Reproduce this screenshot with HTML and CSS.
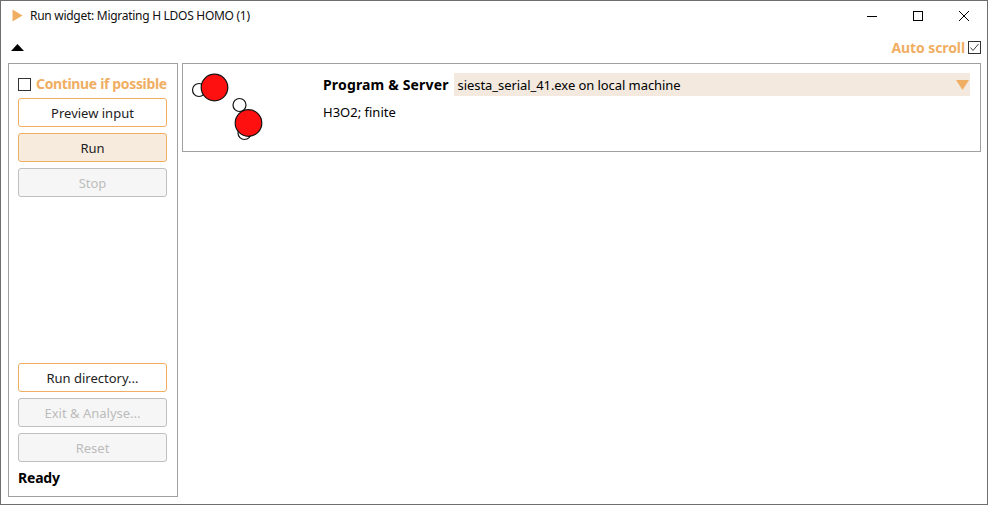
FILE: index.html
```html
<!DOCTYPE html>
<html lang="en">
<head>
<meta charset="utf-8">
<title>Run widget</title>
<link rel="stylesheet" href="styles.css">
</head>
<body>
<div class="window">
  <header class="titlebar">
    <svg class="app-icon" width="12" height="13" viewBox="0 0 12 13"><path d="M0.5 0.5 L10.5 6.5 L0.5 12.5 Z" fill="#f0ae63"/></svg>
    <span class="title">Run widget: Migrating H LDOS HOMO (1)</span>
    <div class="win-controls">
      <svg class="win-btn" width="46" height="30" viewBox="0 0 46 30"><path d="M18 15.5 H28" stroke="#000" stroke-width="1"/></svg>
      <svg class="win-btn" width="46" height="30" viewBox="0 0 46 30"><rect x="18.5" y="10.5" width="9" height="9" fill="none" stroke="#000"/></svg>
      <svg class="win-btn" width="46" height="30" viewBox="0 0 46 30"><path d="M18 10 L28 20 M28 10 L18 20" stroke="#000" stroke-width="1"/></svg>
    </div>
  </header>
  <div class="toolbar">
    <svg class="collapse" width="13" height="7" viewBox="0 0 13 7"><path d="M6.5 0 L13 7 H0 Z" fill="#000"/></svg>
    <div class="autoscroll">
      <span class="accent-label scroll-label">Auto scroll</span>
      <svg class="check" width="13" height="13" viewBox="0 0 13 13"><rect x="0.5" y="0.5" width="12" height="12" fill="#fff" stroke="#333"/><path d="M2.5 6.5 L5 9.5 L10.5 3" fill="none" stroke="#444" stroke-width="1"/></svg>
    </div>
  </div>
  <main class="content">
    <aside class="side">
      <div class="continue">
        <span class="box"></span>
        <span class="accent-label continue-label">Continue if possible</span>
      </div>
      <button class="btn">Preview input</button>
      <button class="btn active">Run</button>
      <button class="btn off">Stop</button>
      <div class="spacer"></div>
      <button class="btn">Run directory...</button>
      <button class="btn off">Exit &amp; Analyse...</button>
      <button class="btn off">Reset</button>
      <div class="status">Ready</div>
    </aside>
    <section class="job">
      <svg class="molecule" width="86" height="80" viewBox="0 0 86 80">
        <g stroke="#111" stroke-width="1.2" fill="#fff">
          <circle cx="16" cy="25" r="6.5"/>
          <circle cx="61.5" cy="68" r="6.5"/>
          <circle cx="56.5" cy="40" r="6.5"/>
        </g>
        <g stroke="#111" stroke-width="1.2" fill="#ff1010">
          <circle cx="31.5" cy="22.5" r="13.3"/>
          <circle cx="65.5" cy="58" r="13.3"/>
        </g>
      </svg>
      <div class="job-body">
        <div class="program-row">
          <span class="program-label">Program &amp; Server</span>
          <div class="combo">
            <span class="combo-text">siesta_serial_41.exe on local machine</span>
            <svg width="13" height="10" viewBox="0 0 13 10"><path d="M0 0 H13 L6.5 10 Z" fill="#f0ae63"/></svg>
          </div>
        </div>
        <div class="job-desc">H3O2; finite</div>
      </div>
    </section>
  </main>
</div>
</body>
</html>
```
FILE: styles.css
```css
* { box-sizing: border-box; }
html, body { margin: 0; padding: 0; height: 100%; }
body {
  font-family: "Noto Sans", "Open Sans", "Liberation Sans", sans-serif;
  font-size: 13px;
  color: #000;
  background: #fff;
}
.window {
  width: 988px;
  height: 505px;
  border: 1px solid #6e6e6e;
  display: flex;
  flex-direction: column;
  background: #fff;
}
.titlebar {
  height: 29px;
  display: flex;
  align-items: center;
  padding-left: 11px;
  flex: none;
}
.app-icon { flex: none; margin-right: 6px; }
.title { font-size: 12px; letter-spacing: -0.28px; color: #111; }
.win-controls { margin-left: auto; display: flex; }
.win-btn { display: block; }
.toolbar {
  height: 33px;
  flex: none;
  display: flex;
  align-items: center;
  justify-content: space-between;
  padding: 0 6px 0 10px;
}
.collapse { margin-top: 2px; }
.autoscroll { display: flex; align-items: center; gap: 3px; margin-top: 2px; }
.accent-label { color: #f0ae63; font-weight: 700; font-size: 14px; letter-spacing: -0.35px; }
.scroll-label { letter-spacing: -0.1px; }
.continue-label { padding-bottom: 2px; }
.check { display: block; }
.content {
  flex: 1;
  display: flex;
  align-items: flex-start;
  gap: 4px;
  padding-left: 7px;
  padding-right: 6px;
}
.side {
  width: 170px;
  height: 434px;
  border: 1px solid #a0a0a0;
  padding: 12px 10px 9px 9px;
  display: flex;
  flex-direction: column;
  gap: 6px;
  flex: none;
}
.continue { display: flex; align-items: center; gap: 5px; height: 16px; }
.box { width: 13px; height: 13px; border: 1px solid #333; background: #fff; flex: none; }
.btn {
  height: 29px;
  width: 149px;
  border: 1px solid #f0ae63;
  border-radius: 3px;
  background: #fff;
  font: inherit;
  color: #222;
  padding: 0;
  flex: none;
}
.active { background: #f7ebdd; }
.off { background: #f6f6f6; border-color: #bfbfbf; color: #bcbcbc; }
.spacer { flex: 1; }
.status { font-weight: 700; font-size: 14px; letter-spacing: -0.2px; line-height: 18px; margin-top: 1px; }
.job {
  flex: 1;
  height: 89px;
  border: 1px solid #a0a0a0;
  display: flex;
}
.molecule { display: block; flex: none; margin: 1px 0 0 0; width: 86px; height: 80px; }
.job-body { flex: 1; padding: 9px 10px 0 54px; }
.program-row { display: flex; align-items: center; gap: 5px; }
.program-label { font-weight: 700; font-size: 14px; letter-spacing: 0.16px; white-space: nowrap; }
.combo {
  flex: 1;
  height: 23px;
  background: #f3e9df;
  display: flex;
  align-items: center;
  justify-content: space-between;
  padding: 0 1px 0 4px;
}
.combo-text { letter-spacing: -0.07px; }
.job-desc { margin-top: 7px; line-height: 18px; }
```
